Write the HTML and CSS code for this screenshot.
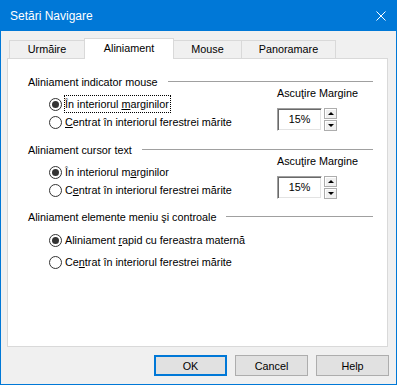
FILE: index.html
```html
<!DOCTYPE html>
<html lang="ro">
<head>
    <meta charset="UTF-8">
    <title>Setări Navigare</title>
    <link rel="stylesheet" href="styles.css">
</head>
<body>
    <div class="window">
        <div class="titlebar">
            <span class="title">Setări Navigare</span>
            <svg class="close" viewBox="0 0 10 10">
                <path d="M0.5 0.5L9.5 9.5M9.5 0.5L0.5 9.5"/>
            </svg>
        </div>

        <div class="client">
            <div class="tabs">
                <div class="tab tab-track">Urmăire</div>
                <div class="tab tab-align active">Aliniament</div>
                <div class="tab tab-mouse">Mouse</div>
                <div class="tab tab-pan">Panoramare</div>
            </div>

            <div class="panel">
                <div class="group">
                    <div class="group-head"><span>Aliniament indicator mouse</span><i class="rule"></i></div>
                    <div class="group-body">
                        <div class="options">
                            <div class="radio checked"><span class="radio-mark"></span><span class="radio-text focus">În interiorul <u>m</u>arginilor</span></div>
                            <div class="radio"><span class="radio-mark"></span><span class="radio-text"><u>C</u>entrat în interiorul ferestrei mărite</span></div>
                        </div>
                        <div class="sharpen">
                            <div class="sharpen-label">Ascuţire Margine</div>
                            <div class="spin">
                                <div class="spin-edit">15%</div>
                                <div class="spin-btns">
                                    <span class="spin-btn"><i class="arrow-up"></i></span>
                                    <span class="spin-btn"><i class="arrow-down"></i></span>
                                </div>
                            </div>
                        </div>
                    </div>
                </div>

                <div class="group">
                    <div class="group-head"><span>Aliniament cursor text</span><i class="rule"></i></div>
                    <div class="group-body">
                        <div class="options">
                            <div class="radio checked"><span class="radio-mark"></span><span class="radio-text">În interiorul m<u>a</u>rginilor</span></div>
                            <div class="radio"><span class="radio-mark"></span><span class="radio-text">C<u>e</u>ntrat în interiorul ferestrei mărite</span></div>
                        </div>
                        <div class="sharpen">
                            <div class="sharpen-label">Ascuţire Margine</div>
                            <div class="spin">
                                <div class="spin-edit">15%</div>
                                <div class="spin-btns">
                                    <span class="spin-btn"><i class="arrow-up"></i></span>
                                    <span class="spin-btn"><i class="arrow-down"></i></span>
                                </div>
                            </div>
                        </div>
                    </div>
                </div>

                <div class="group group-menu">
                    <div class="group-head"><span>Aliniament elemente meniu şi controale</span><i class="rule"></i></div>
                    <div class="group-body">
                        <div class="options">
                            <div class="radio checked"><span class="radio-mark"></span><span class="radio-text">Aliniament <u>r</u>apid cu fereastra maternă</span></div>
                            <div class="radio"><span class="radio-mark"></span><span class="radio-text">Ce<u>n</u>trat în interiorul ferestrei mărite</span></div>
                        </div>
                    </div>
                </div>
            </div>

            <div class="buttons">
                <button class="btn default">OK</button>
                <button class="btn">Cancel</button>
                <button class="btn">Help</button>
            </div>
        </div>
    </div>
</body>
</html>
```

FILE: styles.css
```css
* {
    margin: 0;
    padding: 0;
    box-sizing: border-box;
}

body {
    font-family: "Liberation Sans", Arial, sans-serif;
    font-size: 10.8px;
    color: #000;
    background: #fff;
}

.window {
    width: 397px;
    height: 385px;
    border: 1px solid #0078d7;
    background: #f0f0f0;
    display: flex;
    flex-direction: column;
}

/* title bar */
.titlebar {
    height: 30px;
    flex-shrink: 0;
    background: #0078d7;
    color: #fff;
    display: flex;
    align-items: center;
    justify-content: space-between;
    padding: 0 10px 0 9px;
}

.title {
    font-size: 12px;
}

.close {
    width: 10px;
    height: 10px;
    stroke: #fff;
    stroke-width: 1;
    fill: none;
}

.client {
    flex: 1;
    display: flex;
    flex-direction: column;
    padding: 7px 7px 8px 0;
}

/* tabs */
.tabs {
    height: 20px;
    display: flex;
    align-items: flex-end;
    padding-left: 8px;
}

.tab {
    height: 18px;
    margin-left: -1px;
    border: 1px solid #d9d9d9;
    border-bottom: none;
    background: #f0f0f0;
    text-align: center;
    line-height: 17px;
}

.tab:first-child {
    margin-left: 0;
}

.tab.active {
    height: 21px;
    margin-bottom: -1px;
    background: #fff;
    line-height: 18px;
    position: relative;
    z-index: 1;
}

.tab-track { width: 76px; }
.tab-align { width: 90px; }
.tab-mouse { width: 69px; }
.tab-pan { width: 95px; }

/* page */
.panel {
    height: 289px;
    margin: 0 1px 0 6px;
    border: 1px solid #d9d9d9;
    background: #fff;
    padding: 18px 14px 0 20px;
}

.group + .group {
    margin-top: 14px;
}

.group-menu {
    margin-top: 13px !important;
}

.group-head {
    height: 11px;
    line-height: 11px;
    display: flex;
    align-items: center;
    gap: 10px;
}

.group-head .rule {
    flex: 1;
    height: 1px;
    margin-bottom: 2px;
    background: #a0a0a0;
}

.group-body {
    display: flex;
}

.options {
    width: 249px;
    padding: 7px 0 0 21px;
}

.group-menu .options {
    width: auto;
    padding-top: 8px;
}

.group-menu .radio + .radio {
    margin-top: 4px;
}

.radio {
    height: 18px;
    display: flex;
    align-items: center;
    gap: 2px;
}

.radio-mark {
    width: 13px;
    height: 13px;
    border: 1px solid #333;
    border-radius: 50%;
    background: #fff;
    display: flex;
    align-items: center;
    justify-content: center;
}

.radio.checked .radio-mark::after {
    content: "";
    width: 7px;
    height: 7px;
    border-radius: 50%;
    background: #333;
}

.radio-text {
    border: 1px dotted transparent;
    line-height: 16px;
    padding-right: 1px;
    white-space: nowrap;
}

.radio-text.focus {
    border-color: #000;
}

/* sharpen spin box */
.sharpen {
    display: flex;
    flex-direction: column;
}

.sharpen-label {
    line-height: 12px;
    margin-top: -1px;
    white-space: nowrap;
}

.spin {
    display: flex;
    gap: 2px;
    margin-top: 9px;
}

.spin-edit {
    width: 45px;
    height: 23px;
    border: 1px solid;
    border-color: #a0a0a0 #fff #fff #a0a0a0;
    box-shadow: inset 1px 1px 0 #696969, inset -1px -1px 0 #e3e3e3;
    background: #fff;
    text-align: center;
    padding-top: 4px;
    line-height: 13px;
}

.spin-btns {
    display: flex;
    flex-direction: column;
    gap: 1px;
}

.spin-btn {
    width: 13px;
    height: 11px;
    background: #f0f0f0;
    border: 1px solid #adadad;
    box-shadow: inset 1px 1px 0 #fff;
    display: flex;
    align-items: center;
    justify-content: center;
}

.arrow-up,
.arrow-down {
    width: 0;
    height: 0;
    border-left: 3px solid transparent;
    border-right: 3px solid transparent;
}

.arrow-up {
    border-bottom: 3px solid #000;
}

.arrow-down {
    border-top: 3px solid #000;
}

/* dialog buttons */
.buttons {
    display: flex;
    justify-content: flex-end;
    gap: 8px;
    margin-top: 8px;
}

.btn {
    width: 73px;
    height: 21px;
    border: 1px solid #adadad;
    background: #e1e1e1;
    font: inherit;
    color: #000;
    display: flex;
    align-items: center;
    justify-content: center;
}

.btn.default {
    border: 2px solid #0078d7;
}
```
